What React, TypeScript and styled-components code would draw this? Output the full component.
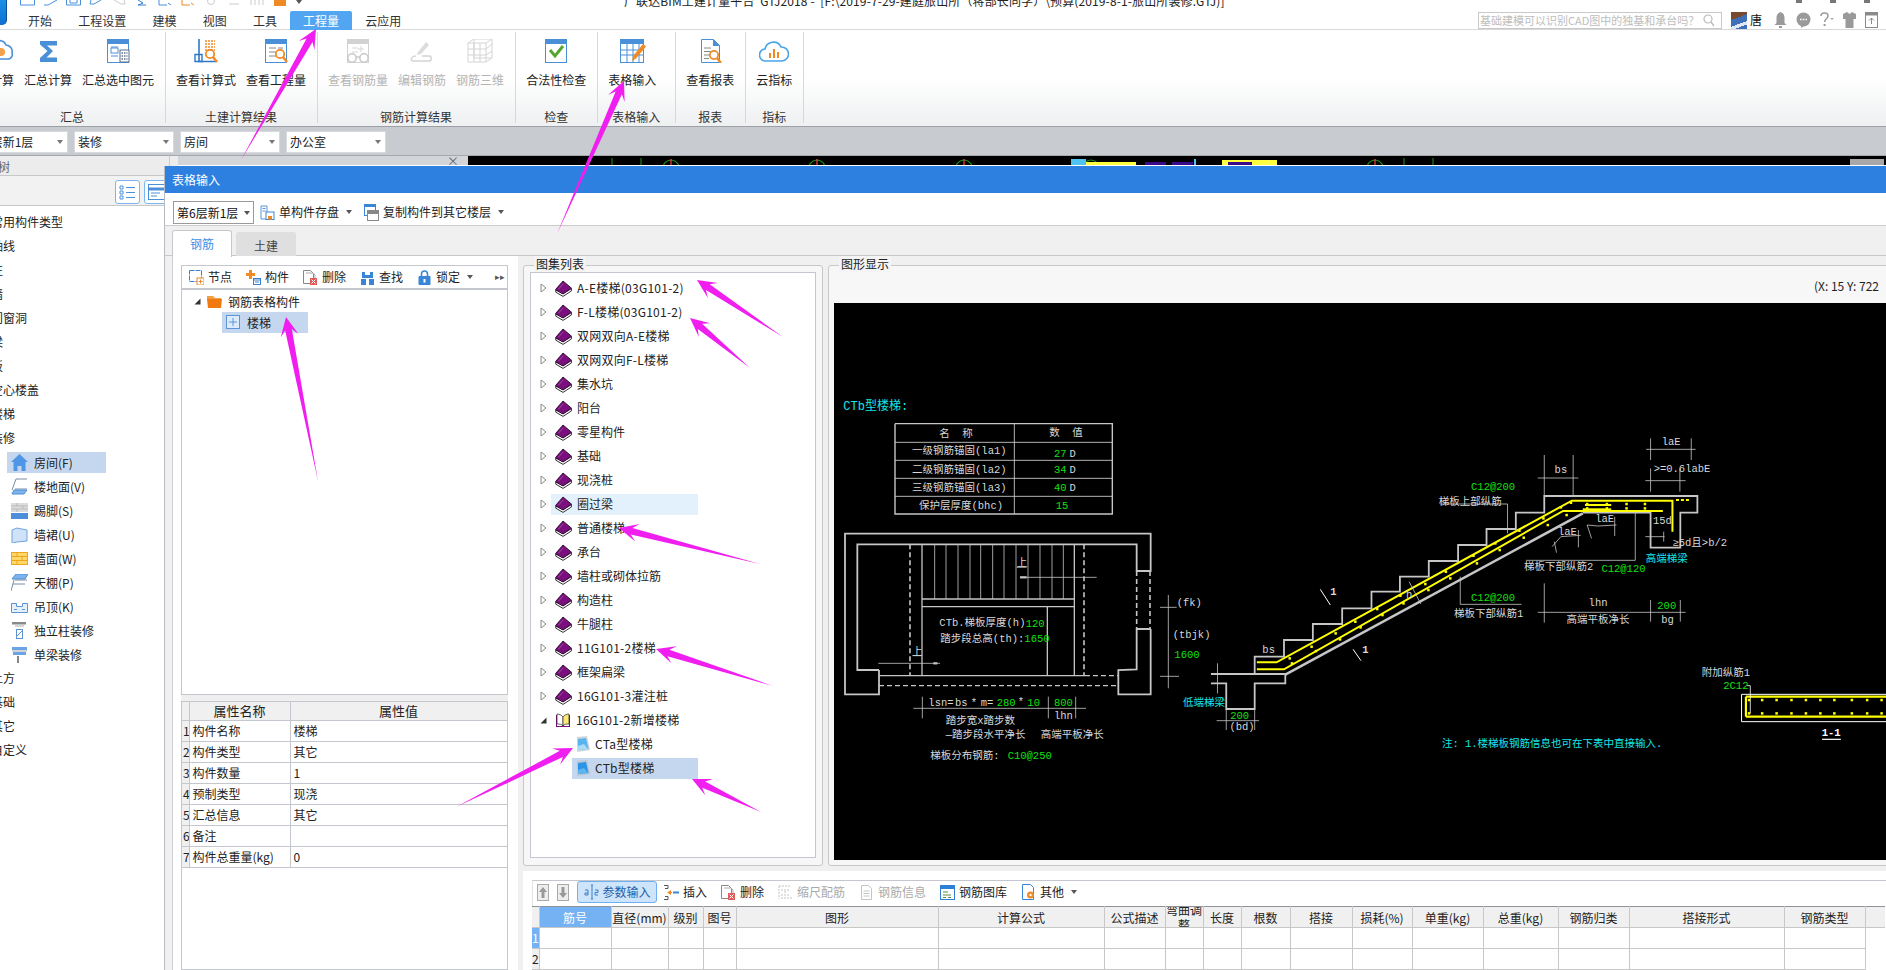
import React from "react";
import styled, { createGlobalStyle, css } from "styled-components";

const Global = createGlobalStyle`
  html, body { margin: 0; padding: 0; background: #fff; }
  * { box-sizing: border-box; }
`;

const FONT = `"Noto Sans CJK SC", "Noto Sans", sans-serif`;
const BLUE = "#4a90d9";
const ORANGE = "#f08a24";

/* ---------- page shell ---------- */
const Page = styled.div`
  position: relative;
  width: 1886px;
  height: 970px;
  overflow: hidden;
  background: #fff;
  font: 12px/16px ${FONT};
  color: #222;
`;
const TitleRow = styled.div`
  display: flex;
  height: 11px;
  padding-left: 20px;
`;
const QuickBar = styled.div`
  display: flex;
  gap: 8px;
  width: 604px;
  height: 6px;
  overflow: hidden;
`;
const Logo = styled.div`
  position: absolute;
  left: -14px;
  top: -8px;
  width: 21px;
  height: 33px;
  border-radius: 5px;
  background: linear-gradient(180deg, #1e9bf0, #0f6fd0);
  border-right: 1px solid #0c4f99;
`;
const WindowTitle = styled.div`
  margin-top: -8px;
  line-height: 18px;
  letter-spacing: 0.12px;
  white-space: pre;
  color: #222;
`;
const WindowControls = styled.div`
  display: flex;
  gap: 28px;
  position: absolute;
  right: 16px;
  top: 0;
  span { display: block; width: 6px; height: 3px; background: #777; }
`;
const TabRow = styled.div`
  display: flex;
  height: 19px;
  padding-left: 15px;
  border-bottom: 1px solid #d9d9d9;
`;
const TopTab = styled.div<{ $on?: boolean }>`
  padding: 0 13.1px;
  height: 19px;
  line-height: 20px;
  color: ${(p) => (p.$on ? "#fff" : "#333")};
  background: ${(p) => (p.$on ? "#52a5f0" : "transparent")};
  border-radius: 2px 2px 0 0;
  white-space: nowrap;
`;
const TopRight = styled.div`
  margin-left: auto;
  display: flex;
  align-items: center;
  height: 18px;
`;
const SearchBox = styled.div`
  display: flex;
  align-items: center;
  justify-content: space-between;
  width: 244px;
  height: 17px;
  padding: 0 6px 0 1px;
  border: 1px solid #c8c8c8;
  color: #bdbdbd;
  font-size: 11px;
  white-space: nowrap;
`;
const Avatar = styled.div`
  width: 16px;
  height: 17px;
  margin-left: 9px;
  background: linear-gradient(160deg, #7a4a30 0 35%, #3f6fb8 35% 65%, #dfe8f5 65% 80%, #3f6fb8 80%);
`;
const UserName = styled.span`
  margin: 0 11px 0 3px;
  color: #111;
`;
const TopIcons = styled.div`
  display: flex;
  align-items: center;
  gap: 8px;
  padding-right: 8px;
`;

/* ---------- ribbon ---------- */
const Ribbon = styled.div`
  display: flex;
  height: 97px;
  padding: 2px 0 3px;
  margin-left: -20px;
  width: 1906px;
  background: linear-gradient(180deg, #fff 0%, #fff 50%, #eef0f1 100%);
  border-bottom: 1px solid #9da1a6;
`;
const RibbonGroup = styled.div<{ $min?: number }>`
  display: flex;
  flex-direction: column;
  padding: 0 11px 0 10px;
  border-right: 1px solid #d6d8da;
  min-width: ${(p) => p.$min ?? 0}px;
`;
const RibbonButtons = styled.div`
  display: flex;
  gap: 10px;
  flex: 1;
`;
const RibbonButton = styled.div<{ $off?: boolean }>`
  display: flex;
  flex-direction: column;
  align-items: center;
  padding-top: 7px;
  white-space: nowrap;
  color: ${(p) => (p.$off ? "#b4b4b4" : "#222")};
  svg { display: block; margin-bottom: 9px; flex: none; }
`;
const RibbonLabel = styled.div`
  text-align: center;
  height: 16px;
  line-height: 16px;
  margin-bottom: -2px;
  color: #333;
  white-space: nowrap;
`;

/* ---------- filter strip ---------- */
const FilterStrip = styled.div`
  display: flex;
  gap: 6px;
  height: 29px;
  padding: 4px 0 0;
  margin-left: -32px;
  width: 1918px;
  background: #c8cbcf;
  border-bottom: 1px solid #a5a8ac;
`;
const FilterSelect = styled.div`
  display: flex;
  align-items: center;
  justify-content: space-between;
  width: 100px;
  height: 22px;
  padding: 0 4px 0 3px;
  background: #fff;
  border: 1px solid #d8dadd;
  white-space: nowrap;
`;
const Caret = styled.i<{ $dark?: boolean }>`
  display: inline-block;
  width: 0;
  height: 0;
  flex: none;
  border-left: 3px solid transparent;
  border-right: 3px solid transparent;
  border-top: 4px solid ${(p) => (p.$dark ? "#555" : "#777")};
`;

/* ---------- workspace behind the dialog ---------- */
const Workspace = styled.div`
  display: flex;
  height: 813px;
`;
const LeftNav = styled.div`
  flex: 0 0 170px;
  display: flex;
  flex-direction: column;
  border-right: 1px solid #ccc;
`;
const NavHeader = styled.div`
  height: 20px;
  flex: none;
  margin-left: -26px;
  line-height: 22px;
  background: #ececec;
  border-bottom: 1px solid #c8c8c8;
  color: #666;
  white-space: nowrap;
`;
const NavTools = styled.div`
  display: flex;
  justify-content: flex-end;
  gap: 4px;
  height: 30px;
  flex: none;
  padding-top: 4px;
  background: #f2f2f2;
  border-bottom: 1px solid #c8c8c8;
`;
const NavToolButton = styled.div`
  display: flex;
  align-items: center;
  justify-content: center;
  width: 25px;
  height: 24px;
  background: #fff;
  border: 1px solid #7ab6f0;
  border-radius: 3px;
`;
const NavTree = styled.div`
  display: flex;
  flex-direction: column;
  margin-left: -9px;
  padding-top: 4px;
`;
const NavRow = styled.div`
  height: 24px;
  line-height: 24px;
  white-space: nowrap;
  color: #222;
`;
const NavSub = styled.div<{ $on?: boolean }>`
  display: flex;
  align-items: center;
  gap: 6px;
  width: 99px;
  height: 21px;
  margin: 2px 0 1px 16px;
  padding-left: 4px;
  white-space: nowrap;
  background: ${(p) => (p.$on ? "#c5d7ee" : "transparent")};
  svg { flex: none; }
`;
const LightGap = styled.div`
  flex: 0 0 8px;
  background: #ececec;
`;
const ClosedPane = styled.div`
  flex: 0 0 290px;
  height: 9px;
  padding-right: 9px;
  background: #d3d5d9;
  color: #666;
  text-align: right;
  line-height: 10px;
  font-size: 12px;
`;
const CadStrip = styled.div`
  flex: 1;
  height: 9px;
  background: #000;
  svg { display: block; }
`;

/* ---------- dialog ---------- */
const Dialog = styled.div`
  position: absolute;
  left: 164px;
  top: 166px;
  right: 0;
  bottom: 0;
  display: flex;
  flex-direction: column;
  overflow: hidden;
  background: #f0f0f0;
  border-left: 1px solid #b8bcc2;
`;
const DialogTitle = styled.div`
  flex: none;
  height: 27px;
  line-height: 27px;
  padding-left: 7px;
  background: #2d7fe0;
  color: #fff;
`;
const DialogTools = styled.div`
  flex: none;
  display: flex;
  height: 33px;
  padding: 8px 0 0 8px;
  background: #fff;
  border-bottom: 1px solid #ccc;
`;
const FloorSelect = styled.div`
  display: flex;
  align-items: center;
  justify-content: space-between;
  width: 81px;
  height: 23px;
  padding: 0 3px;
  border: 1px solid #9a9a9a;
  white-space: nowrap;
  color: #111;
`;
const ToolItem = styled.div<{ $pad?: number; $off?: boolean; $on?: boolean }>`
  display: flex;
  align-items: center;
  gap: 4px;
  height: 22px;
  padding: 0 ${(p) => p.$pad ?? 7}px;
  white-space: nowrap;
  color: ${(p) => (p.$off ? "#aaa" : "#222")};
  svg { flex: none; }
  ${(p) =>
    p.$on &&
    css`
      background: #cde4fb;
      border: 1px solid #6fb1f0;
      border-radius: 3px;
      padding: 0 5.5px;
      color: #1f5fa8;
    `}
`;
const CaretSlot = styled.span`
  display: inline-flex;
  align-items: center;
  margin-left: 3px;
`;
const TabStrip = styled.div`
  flex: none;
  display: flex;
  gap: 4px;
  height: 30px;
  padding: 4px 0 0 7px;
  border-bottom: 1px solid #c8c8c8;
`;
const SheetTab = styled.div<{ $on?: boolean }>`
  width: 60px;
  height: ${(p) => (p.$on ? 27 : 24)}px;
  margin-top: ${(p) => (p.$on ? 0 : 2)}px;
  text-align: center;
  line-height: 25px;
  border-radius: 3px 3px 0 0;
  background: ${(p) => (p.$on ? "#fff" : "#dfdfdf")};
  color: ${(p) => (p.$on ? "#3a8ee6" : "#444")};
  border: 1px solid ${(p) => (p.$on ? "#c8c8c8" : "#dfdfdf")};
  border-bottom: 0;
  position: relative;
`;
const MainRow = styled.div`
  flex: 1;
  display: flex;
  padding-left: 7px;
  min-height: 0;
`;
const LeftColumn = styled.div`
  flex: 0 0 346px;
  min-width: 0;
  display: flex;
  flex-direction: column;
  padding: 9px 10px 0 8px;
  background: #fff;
  border-left: 1px solid #d0d0d0;
`;
const BoxTools = styled.div`
  flex: none;
  display: flex;
  align-items: center;
  height: 25px;
  border: 1px solid #c4c8ce;
  border-bottom: 2px solid #c4c8ce;
  position: relative;
`;
const TreeBox = styled.div`
  flex: 0 0 405px;
  padding-top: 1px;
  border: 1px solid #c4c8ce;
  border-top: 0;
`;
const TreeRow = styled.div<{ $indent: number }>`
  display: flex;
  align-items: center;
  gap: 6px;
  height: 21px;
  padding-left: ${(p) => p.$indent}px;
  white-space: nowrap;
`;
const TreeChip = styled.div`
  display: flex;
  align-items: center;
  gap: 6px;
  width: 86px;
  height: 21px;
  padding-left: 4px;
  background: #c5d7ee;
`;
const MoreArrows = styled.span`
  position: absolute;
  right: 2px;
  top: 3px;
  font-size: 9px;
  color: #555;
`;
const PropGap = styled.div`
  flex: 0 0 6px;
  background: #efefef;
`;
const PropBox = styled.div`
  flex: 1;
  border: 1px solid #c4c8ce;
  border-top: 0;
`;
const PropTable = styled.table`
  width: 325px;
  table-layout: fixed;
  border-collapse: collapse;
  td, th {
    border-right: 1px solid #c4c8ce;
    border-bottom: 1px solid #c4c8ce;
    padding: 0 0 0 3px;
    font-weight: 400;
    white-space: nowrap;
    overflow: hidden;
    height: 21px;
    color: #222;
  }
  th {
    height: 19px;
    padding: 0;
    font-size: 13px;
    background: #f0f0f0;
    border-top: 1px solid #c4c8ce;
    line-height: 18px;
  }
  td:first-child { padding: 0 0 0 1px; background: #f0f0f0; }
`;
const RightStack = styled.div`
  flex: 1;
  display: flex;
  flex-direction: column;
  margin-left: 5px;
  min-width: 0;
`;
const TopPanes = styled.div`
  flex: 0 0 610px;
  display: flex;
  gap: 5px;
  padding-top: 9px;
`;
const GroupBox = styled.div<{ $grow?: boolean }>`
  position: relative;
  flex: ${(p) => (p.$grow ? "0 0 1066px" : "0 0 300px")};
  padding: 6px 6px 5px ${(p) => (p.$grow ? 5 : 6)}px;
  background: #f7f7f7;
  border: 1px solid #c8c8c8;
  border-radius: 3px;
`;
const GroupLegend = styled.div`
  position: absolute;
  left: 10px;
  top: -10px;
  padding: 0 2px;
  height: 16px;
  line-height: 16px;
  background: #f4f4f4;
  color: #222;
`;
const ListBox = styled.div`
  height: 586px;
  padding-top: 3px;
  background: #fff;
  border: 1px solid #c4c8ce;
`;
const AtlasRow = styled.div<{ $indent?: number }>`
  display: flex;
  align-items: center;
  height: 24px;
  padding-left: ${(p) => p.$indent ?? 9}px;
  white-space: nowrap;
  color: #222;
`;
const AtlasChip = styled.div<{ $tone?: string; $w: number; $latin?: boolean }>`
  display: flex;
  align-items: center;
  width: ${(p) => p.$w}px;
  height: 21px;
  padding-left: 4px;
  gap: 5px;
  letter-spacing: ${(p) => (p.$latin ? 0.25 : 0)}px;
  background: ${(p) => p.$tone ?? "transparent"};
  svg { flex: none; }
`;
const ExpandSlot = styled.span`
  display: inline-flex;
  width: 11px;
  svg { display: block; }
`;
const CoordLine = styled.div`
  height: 31px;
  padding: 6px 0 0 980px;
  white-space: nowrap;
  color: #222;
`;
const CadView = styled.div`
  width: 1052px;
  height: 557px;
  background: #000;
  svg { display: block; }
`;
const BottomPanel = styled.div`
  flex: 1;
  margin-top: 5px;
  padding: 9px 0 0 9px;
  background: #fff;
  overflow: hidden;
`;
const BottomTools = styled.div`
  display: flex;
  align-items: center;
  height: 26px;
  padding-left: 4px;
  padding-bottom: 3px;
  border-top: 1px solid #c4c8ce;
  border-left: 1px solid #e4e4e4;
`;
const ArrowKey = styled.div`
  width: 12px;
  height: 17px;
  margin-right: 8px;
  background: #eee;
  border: 1px solid #aaa;
  svg { display: block; }
`;
const GridTable = styled.table`
  table-layout: fixed;
  border-collapse: collapse;
  width: 1353px;
  border-top: 1px solid #8d9299;
  th, td {
    padding: 0;
    border-right: 1px solid #c8c8c8;
    border-bottom: 1px solid #c8c8c8;
    font-weight: 400;
  }
  th {
    height: 21px;
    background: #f0f0f0;
    color: #222;
  }
  td { height: 21px; background: #fff; }
  td:first-child { background: #f0f0f0; overflow: hidden; }
  td:last-child, th:last-child { border-right: 0; }
  td:last-child { border-bottom: 0; }
`;
const HeadCell = styled.div`
  display: flex;
  align-items: center;
  justify-content: center;
  height: 20px;
  line-height: 15px;
  text-align: center;
  overflow: hidden;
`;
const HeadCellActive = styled(HeadCell)`
  background: #74b2f3;
  color: #fff;
`;
const RowNum = styled.div<{ $on?: boolean }>`
  height: 20px;
  line-height: 20px;
  overflow: hidden;
  color: ${(p) => (p.$on ? "#fff" : "#222")};
  background: ${(p) => (p.$on ? "#74b2f3" : "transparent")};
`;
const Arrows = styled.svg`
  position: absolute;
  inset: 0;
  pointer-events: none;
`;

/* ---------- icons ---------- */
const S = (w: number, h: number, vw: number, vh: number, c: React.ReactNode) => (
  <svg width={w} height={h} viewBox={`0 0 ${vw} ${vh}`} fill="none">
    {c}
  </svg>
);
const R = (n: React.ReactNode) => S(28, 24, 28, 24, n);

const Magnifier = ({ x, y }: { x: number; y: number }) => (
  <g>
    <circle cx={x} cy={y} r="4.2" fill="#fff" stroke={ORANGE} strokeWidth="1.8" />
    <path d={`M${x + 3} ${y + 3}l4 5`} stroke={ORANGE} strokeWidth="2.4" />
  </g>
);
const gDoc = (off: boolean) => {
  const c = off ? "#d2d2d2" : BLUE;
  return (
    <>
      <rect x="3.5" y="0.5" width="21" height="23" fill="#fff" stroke={c} />
      <rect x="3" y="0" width="22" height="5" fill={c} />
    </>
  );
};

const ribbonIcons: Record<string, React.ReactNode> = {
  cloudCalc: S(24, 24, 24, 24, (
    <>
      <path d="M1 19a6 6 0 0 1 1-12 7.5 7.5 0 0 1 14-1 6.5 6.5 0 0 1 6 8 4.5 4.5 0 0 1-3 6H3z" stroke={BLUE} strokeWidth="1.6" fill="#fff" />
      <circle cx="11" cy="13" r="4" fill="#f5a04a" />
    </>
  )),
  sigma: R(<path d="M6 2h17v4.5h-10l6 5.5-6.5 6.5H23V23H6v-4l7.5-7L6 5.5z" fill={BLUE} />),
  selected: R(
    <>
      {gDoc(false)}
      <rect x="7" y="9" width="7" height="5" stroke={BLUE} />
      <path d="M7 8h7M7 17h7" stroke={BLUE} />
      <rect x="16" y="11" width="9" height="12" fill="#fff" stroke="#5b6f85" />
      <path d="M17.5 14h6M17.5 17h6M17.5 20h6" stroke="#5b6f85" strokeDasharray="1.5 1" strokeWidth="1.4" />
    </>
  ),
  formula: R(
    <>
      <path d="M7 0v22.5h17" stroke="#2f78c8" strokeWidth="1.6" />
      <path d="M3 15.5h7v7H3z" stroke="#2f78c8" strokeWidth="1.4" />
      <path d="M13 2h10M13 5h10M13 8h10M13 11h10" stroke={ORANGE} strokeWidth="1.6" strokeDasharray="2 1" />
      <Magnifier x={18} y={15} />
    </>
  ),
  quantity: R(
    <>
      {gDoc(false)}
      <path d="M7 9h7M7 13h7M7 17h7M16 9h5" stroke="#888" />
      <Magnifier x={18} y={15} />
    </>
  ),
  rebarGlasses: R(
    <>
      {gDoc(true)}
      <path d="M8 9h6M8 13h6M17 7v6M14 10h6" stroke="#d6d6d6" />
      <circle cx="8" cy="19" r="4.2" stroke="#c9c9c9" strokeWidth="1.6" fill="#fff" />
      <circle cx="20" cy="19" r="4.2" stroke="#c9c9c9" strokeWidth="1.6" fill="#fff" />
      <path d="M12 18h4" stroke="#c9c9c9" strokeWidth="1.4" />
    </>
  ),
  editRebar: R(
    <>
      <path d="M10 13l8-10 3 3-8 9-4 1z" fill="#dcdcdc" />
      <path d="M4 22c-2-3 1-5 4-5M14 17h7c3 0 3 5 0 5H4" stroke="#d4d4d4" strokeWidth="1.4" />
    </>
  ),
  rebar3d: R(
    <path d="M2 4l6-4h18v19l-6 4H2zM2 4h18v19M20 4l6-4M8 0v19h18M2 10h18l6-5M2 16h18l6-4M8 4v19M14 4v19" stroke="#d4d4d4" strokeWidth="1" />
  ),
  check: R(
    <>
      {gDoc(false)}
      <path d="M8 11l5 6 8-10" stroke="#55a630" strokeWidth="3" fill="none" />
    </>
  ),
  table: R(
    <>
      <rect x="2.5" y="0.5" width="23" height="23" fill="#fff" stroke={BLUE} />
      <rect x="2" y="0" width="24" height="5" fill={BLUE} />
      <path d="M3 11h22M3 16h22M9 5v18M15 5v18M21 5v18" stroke={BLUE} />
      <path d="M14 22l1-5 10-12 3 2.5-10 12z" fill={ORANGE} />
    </>
  ),
  report: R(
    <>
      <path d="M5.5.5h12l6 6v17h-18z" fill="#fff" stroke={BLUE} />
      <path d="M17 0l7 7h-7z" fill={BLUE} />
      <path d="M8 9h7M8 12.5h7M8 16h5M8 19.5h5" stroke="#888" />
      <Magnifier x={18} y={16} />
    </>
  ),
  cloudIndex: S(30, 24, 30, 24, (
    <>
      <path d="M7 22a6 6 0 0 1-1-12 8.5 8.5 0 0 1 16-2 7 7 0 0 1 1 14z" stroke="#49a5e8" strokeWidth="1.6" fill="#fff" />
      <path d="M10 14h2v5h-2zM14 10h2v9h-2zM18 13h2v6h-2z" fill={ORANGE} />
    </>
  )),
};

const small: Record<string, React.ReactNode> = {
  list: S(17, 16, 17, 16, <path d="M1 2h3v3H1zM1 7h3v3H1zM1 12h3v3H1zM7 3.5h9M7 8.5h9M7 13.5h9" stroke={BLUE} />),
  form: S(17, 16, 17, 16, <><rect x=".5" y=".5" width="16" height="15" stroke={BLUE} /><path d="M1 5h15" stroke={BLUE} strokeWidth="3" /><path d="M3 9h9M3 12h6" stroke={BLUE} /></>),
  house: S(17, 17, 17, 17, <path d="M8.5 0L17 8h-2.5v9h-4v-5h-4v5h-4V8H0z" fill="#4f97e6" />),
  floor: S(17, 17, 17, 17, <><path d="M5 1h11M5 1L1 12M4 11h12" stroke="#7a8da3" /><path d="M3 12h13l-3 4H1z" fill="#7db3ee" stroke="#4f8fd4" /></>),
  brick: S(17, 16, 17, 16, <><path d="M0 0h17v9H0z" fill="#dcdcdc" /><path d="M0 3h17M0 6h17M6 0v3M12 3v3M6 6v3" stroke="#bbb" /><path d="M0 10h17v6H0z" fill="#4d8fd8" /></>),
  wainscot: S(17, 16, 17, 16, <path d="M1 3l5-2 10 2v11l-10 1-5 1z" fill="#cfe2f8" stroke="#6ea5e2" />),
  wall: S(17, 13, 17, 13, <><rect x=".5" y=".5" width="16" height="12" fill="#ffd76a" stroke="#eda51b" /><path d="M0 4.5h17M0 8.5h17M6 0v4.5M11 4.5v4M6 8.5V13" stroke="#eda51b" /></>),
  ceiling: S(17, 17, 17, 17, <><path d="M5 0h12l-3 5H1z" fill="#7db3ee" stroke="#4f8fd4" /><path d="M4 6h12M3 6L0 17M2 10h12" stroke="#7a8da3" /></>),
  hung: S(17, 12, 17, 12, <path d="M.5 2.5h5v3h6v-3h5v9H.5zM3 8.5h3M11 8.5h3" stroke="#5b95d8" fill="#e5f0fb" />),
  colFinish: S(17, 17, 17, 17, <><path d="M1 0h14v3L12 7v10H5V7L1 3z" fill="#fff" /><path d="M1 1h14" stroke="#8a8a8a" strokeWidth="3" /><path d="M4 4h9" stroke="#aaa" /><rect x="5.5" y="7.5" width="6" height="9" stroke="#5b95d8" /><path d="M6 14l5-5" stroke="#5b95d8" /></>),
  beamFinish: S(17, 17, 17, 17, <><path d="M1 1h15v3H1z" fill="#6aa4e6" /><path d="M2 6h13v3H2z" fill="#6aa4e6" /><path d="M7 10v7" stroke="#888" strokeWidth="2" /><path d="M1 5h15" stroke="#aaa" /></>),
  save: S(15, 15, 15, 15, <><path d="M1 1h6v13H1z" stroke="#5b95d8" /><path d="M2.5 3.5h3M2.5 6h3" stroke="#5b95d8" /><rect x="6" y="7" width="8" height="7.5" fill="#fff" stroke="#3a86d6" /><rect x="8" y="11" width="4" height="3.5" fill={ORANGE} /></>),
  copy: S(15, 17, 15, 17, <><rect x=".5" y=".5" width="11" height="11" fill="#fff" stroke="#3a86d6" /><path d="M0 1.5h12" stroke="#3a86d6" strokeWidth="3" /><rect x="3.5" y="6.5" width="11" height="10" fill="#fff" stroke="#888" /><path d="M3 8.5h12" stroke="#888" strokeWidth="3" /></>),
  node: S(15, 15, 15, 15, <><rect x=".5" y=".5" width="12" height="11" stroke="#3a7fcc" strokeDasharray="5 1" /><rect x="8" y="8" width="7" height="7" fill="#fff" stroke="#e88a2a" /><path d="M11.5 9.5v4M9.5 11.5h4" stroke="#e88a2a" /></>),
  component: S(15, 15, 15, 15, <><path d="M3 0h3v3h3v3H6v3H3V6H0V3h3z" fill={ORANGE} /><rect x="7.5" y="8.5" width="7" height="6" fill="#fff" stroke="#3a7fcc" /><path d="M7 10h8M9 12h4" stroke="#3a7fcc" /></>),
  del: S(15, 15, 15, 15, <><path d="M.5.5h7l3 3v10H.5z" fill="#fff" stroke="#888" /><path d="M3 3h7l2 2v9" stroke="#aaa" /><rect x="7" y="8" width="7" height="7" fill="#e05a5a" /><path d="M8.5 9.5l4 4M12.5 9.5l-4 4" stroke="#fff" /></>),
  find: S(15, 15, 15, 15, <path d="M1 9h5v6H1zM9 9h5v6H9zM2 2h3v6H2zM10 2h3v6h-3zM5 5h5v3H5z" fill="#3a86d6" />),
  lock: S(15, 15, 15, 15, <><path d="M4.5 7V4a3 3 0 0 1 6 0v3" stroke="#3a86d6" strokeWidth="1.6" /><rect x="1.5" y="6" width="12" height="9" rx="1" fill="#3a86d6" /><rect x="6.5" y="9" width="2" height="3.5" fill="#fff" /></>),
  folder: S(15, 13, 15, 13, <><path d="M0 1h6l2 2h6v2H0z" fill="#f0a040" /><path d="M0 4h15l-1 9H1z" fill="#f07a10" /></>),
  stair: S(15, 15, 15, 15, <><rect x=".5" y=".5" width="13" height="13" fill="#dcebfa" stroke="#5b95d8" /><path d="M7 3v8M3 7h8" stroke="#5b95d8" /></>),
  book: S(17, 17, 17, 17, <><path d="M.8 10v2.2L8 16.4l8.4-5.4V8.6L8 13.6z" fill="#fff" stroke="#1c1c1c" strokeWidth=".9" /><path d="M.5 9.6L8 1l8.5 7.2L8 14z" fill="#7a0f7e" stroke="#2c0830" strokeWidth=".9" /><path d="M3.5 9.2L8.4 3.6" stroke="#a850ab" strokeWidth=".8" /></>),
  openBook: S(16, 15, 16, 15, <><path d="M1 14h14V2h-1v11H2V2H1z" fill="#7a0f7e" /><path d="M2 1c2 0 5 1 6 3v9C7 11 4 11 2 11z" fill="#fff" stroke="#222" strokeWidth=".7" /><path d="M14 1c-2 0-5 1-6 3v9c1-2 4-2 6-2z" fill="#ffe87a" stroke="#222" strokeWidth=".7" /></>),
  sheetA: S(14, 16, 14, 16, <><path d="M1 1l10-1 3 14-13 2z" fill="#cfd6dc" /><path d="M2 3l8-1 2.5 11L2 14z" fill="#57b4ec" /><path d="M2 10l6-2 4 5-10 1z" fill="#a9dbf5" /></>),
  sheetB: S(14, 16, 14, 16, <><path d="M1 1l10-1 3 14-13 2z" fill="#b8c6d6" /><path d="M2 3l8-1 2.5 11L2 14z" fill="#2b94e6" /><path d="M2 10l6-2 4 5-10 1z" fill="#5fb6ef" /></>),
  closedArrow: S(7, 10, 7, 10, <path d="M1 1l5 4-5 4z" stroke="#888" fill="#fff" />),
  openArrow: S(7, 7, 7, 7, <path d="M6.5 .5v6h-6z" fill="#333" />),
  aje: S(15, 16, 15, 16, <path d="M1 6h3v5H1V9h3M7 1h1M9 1H8v14M7 15h2M11 6h3v2.5h-3V11h3" stroke="#3a7fcc" />),
  insert: S(15, 15, 15, 15, <><path d="M0 .5h4v3H1M0 14.5h4v-3H1" stroke="#555" /><path d="M7 5v5L3 7.5z" fill={ORANGE} /><path d="M6 7.5h2" stroke={ORANGE} /><path d="M9 7.5h6" stroke="#3a86d6" strokeWidth="2" /></>),
  scale: S(15, 15, 15, 15, <path d="M1 1h12M1 1v13M4 14V8M7 14V6M10 14V9M13 14v-3M3 5h9" stroke="#c4c4c4" strokeDasharray="2 1" />),
  info: S(15, 15, 15, 15, <><path d="M2.5 .5h7l3 3v11h-10z" stroke="#c4c4c4" /><path d="M4.5 6h6M4.5 8.5h6M4.5 11h6" stroke="#c4c4c4" /></>),
  library: S(15, 15, 15, 15, <><rect x=".5" y=".5" width="14" height="14" fill="#fff" stroke="#2d7fd8" /><path d="M0 2.5h15" stroke="#2d7fd8" strokeWidth="3" /><path d="M3 7h5M3 10h8M3 12.5h3M8 12.5h3" stroke="#5a8a40" /></>),
  other: S(15, 16, 15, 16, <><path d="M1.5 .5h8l3 3v12h-11z" fill="#fff" stroke="#3a86d6" /><circle cx="9.5" cy="11" r="3.5" fill={ORANGE} /><circle cx="9.5" cy="11" r="1.2" fill="#fff" /></>),
  searchGlass: S(12, 13, 12, 13, <><circle cx="5" cy="5" r="4" stroke="#bbb" strokeWidth="1.2" /><path d="M8 8l3 4" stroke="#bbb" strokeWidth="1.4" /></>),
  bell: S(15, 16, 15, 16, <path d="M7.5 0c3 1 4 3 4 6v5l2 2H1.5l2-2V6c0-3 1-5 4-6zM6 14h3v2H6z" fill="#9a9a9a" />),
  chat: S(15, 16, 15, 16, <><circle cx="7.5" cy="7.5" r="7" fill="#9a9a9a" /><path d="M5 14v2l3-2z" fill="#9a9a9a" /><path d="M4 7.5h7" stroke="#fff" strokeWidth="1.6" strokeDasharray="1.6 1.2" /></>),
  help: S(15, 16, 15, 16, <><path d="M2 4c0-4 7-4 7 0 0 3-3.5 3-3.5 6" stroke="#9a9a9a" strokeWidth="1.5" /><rect x="4.6" y="12" width="2" height="2" fill="#9a9a9a" /><path d="M11 6l2 2 2-2z" fill="#aaa" /></>),
  shirt: S(15, 16, 15, 16, <path d="M5 0L1 2v5h2.5v9h8V7H14V2l-4-2-2.5 2z" fill="#9a9a9a" />),
  box: S(13, 16, 13, 16, <><rect x=".5" y=".5" width="12" height="15" fill="#fff" stroke="#8a8a8a" /><path d="M0 2h13" stroke="#8a8a8a" strokeWidth="3" /><path d="M6.5 6v6M4 8.5l2.5-2.5L9 8.5" stroke="#8a8a8a" /></>),
};

/* ---------- data ---------- */
const ribbon = [
  { label: "汇总", buttons: [{ t: "计算", i: "cloudCalc" }, { t: "汇总计算", i: "sigma" }, { t: "汇总选中图元", i: "selected" }] },
  { label: "土建计算结果", buttons: [{ t: "查看计算式", i: "formula" }, { t: "查看工程量", i: "quantity" }] },
  { label: "钢筋计算结果", buttons: [{ t: "查看钢筋量", i: "rebarGlasses", off: true }, { t: "编辑钢筋", i: "editRebar", off: true }, { t: "钢筋三维", i: "rebar3d", off: true }] },
  { label: "检查", buttons: [{ t: "合法性检查", i: "check" }] },
  { label: "表格输入", min: 78, buttons: [{ t: "表格输入", i: "table" }] },
  { label: "报表", buttons: [{ t: "查看报表", i: "report" }] },
  { label: "指标", buttons: [{ t: "云指标", i: "cloudIndex" }] },
];

const navBefore = ["常用构件类型", "轴线", "柱", "墙", "门窗洞", "梁", "板", "空心楼盖", "楼梯", "装修"];
const navSubs = [
  { t: "房间(F)", i: "house", on: true },
  { t: "楼地面(V)", i: "floor" },
  { t: "踢脚(S)", i: "brick" },
  { t: "墙裙(U)", i: "wainscot" },
  { t: "墙面(W)", i: "wall" },
  { t: "天棚(P)", i: "ceiling" },
  { t: "吊顶(K)", i: "hung" },
  { t: "独立柱装修", i: "colFinish" },
  { t: "单梁装修", i: "beamFinish" },
];
const navAfter = ["土方", "基础", "其它", "自定义"];

const props = [
  ["构件名称", "楼梯"],
  ["构件类型", "其它"],
  ["构件数量", "1"],
  ["预制类型", "现浇"],
  ["汇总信息", "其它"],
  ["备注", ""],
  ["构件总重量(kg)", "0"],
];

const atlas = [
  "A-E楼梯(03G101-2)", "F-L楼梯(03G101-2)", "双网双向A-E楼梯", "双网双向F-L楼梯", "集水坑", "阳台", "零星构件", "基础", "现浇桩",
  "圈过梁", "普通楼梯", "承台", "墙柱或砌体拉筋", "构造柱", "牛腿柱", "11G101-2楼梯", "框架扁梁", "16G101-3灌注桩",
];

const columns: [string, number][] = [
  ["", 7], ["筋号", 72], ["直径(mm)", 57], ["级别", 35], ["图号", 33], ["图形", 202], ["计算公式", 166], ["公式描述", 61],
  ["弯曲调整", 38], ["长度", 38], ["根数", 49], ["搭接", 62], ["损耗(%)", 60], ["单重(kg)", 71], ["总重(kg)", 75],
  ["钢筋归类", 71], ["搭接形式", 155], ["钢筋类型", 81], ["", 20],
];

/* ---------- CAD drawing ---------- */
type Pt = [number, number];
const z7 = (p: Pt): Pt => [830 + p[0] / 3, 390 + p[1] / 3];
const z8 = (p: Pt): Pt => [1200 + p[0] / 2.286, 430 + p[1] / 3];
const pts = (a: Pt[], f: (p: Pt) => Pt) => a.map(f).map((p) => p.join(",")).join(" ");

const W = "#c6c6c6";
const THIN = "#d8d8d8";
const GR = "#12e012";
const CY = "#16e6ea";
const YL = "#ffff00";

const lines7: { p: Pt[]; w?: number; d?: string; c?: string }[] = [
  // plan outline
  { p: [[147, 840], [147, 913], [45, 913], [45, 431], [962, 431], [962, 543], [920, 543], [920, 463], [82, 463], [82, 840], [147, 840]], w: 1.8 },
  { p: [[962, 717], [920, 717], [920, 838], [865, 840], [865, 913], [962, 913], [962, 717]], w: 1.8 },
  { p: [[920, 543], [920, 717]], w: 1.6, d: "5 3" },
  { p: [[960, 543], [960, 717]], w: 1.6, d: "5 3" },
  { p: [[240, 463], [240, 857]], w: 1.6, d: "5 3" },
  { p: [[762, 463], [762, 857]], w: 1.6, d: "5 3" },
  { p: [[276, 463], [276, 857]], w: 1.3 },
  { p: [[733, 463], [733, 857]], w: 1.3 },
  { p: [[276, 627], [733, 627]], w: 1.3 },
  { p: [[276, 650], [733, 650]], w: 1.3 },
  { p: [[652, 650], [652, 857]], w: 1.3 },
  { p: [[147, 857], [765, 857]], w: 1.3 },
  { p: [[765, 857], [865, 857]], w: 1.3, d: "5 3" },
  { p: [[147, 887], [865, 887]], w: 1.3, d: "5 3" },
  ...[314, 348, 384, 420, 452, 488, 522, 558, 594, 630, 666, 700].map((x) => ({ p: [[x, 463], [x, 627]] as Pt[], w: 0.8 })),
  // run arrows and labels
  { p: [[570, 562], [800, 562]], w: 0.8 },
  { p: [[570, 562], [590, 562]], w: 2.2 },
  { p: [[145, 820], [330, 820]], w: 0.8 },
  { p: [[310, 820], [322, 820]], w: 2.2 },
  { p: [[560, 532], [590, 532]], w: 0.8 },
  { p: [[248, 797], [275, 797]], w: 0.8 },
  // side dim
  { p: [[1015, 615], [1015, 895]], w: 0.8 },
  { p: [[990, 652], [1040, 652]], w: 0.8 },
  { p: [[990, 859], [1047, 859]], w: 0.8 },
  // lower dim
  { p: [[250, 955], [768, 955]], w: 0.8 },
  { p: [[277, 920], [277, 985]], w: 0.8 },
  { p: [[655, 920], [655, 985]], w: 0.8 },
  { p: [[737, 920], [737, 985]], w: 0.8 },
  // section table
  { p: [[195, 101], [847, 101], [847, 372], [195, 372], [195, 101]], w: 1.4 },
  { p: [[553, 101], [553, 372]], w: 0.9 },
  { p: [[195, 157], [847, 157]], w: 0.9 },
  { p: [[195, 211], [847, 211]], w: 0.9 },
  { p: [[195, 265], [847, 265]], w: 0.9 },
  { p: [[195, 319], [847, 319]], w: 0.9 },
];

const lines8: { p: Pt[]; w?: number; d?: string; c?: string }[] = [
  { p: [[25, 732], [195, 732], [195, 760], [125, 760], [125, 837], [60, 837], [60, 760], [25, 760]], w: 1.8 },
  {
    p: [[125, 732], [125, 680], [192, 680], [192, 630], [258, 630], [258, 582], [325, 582], [325, 535], [392, 535], [392, 485], [457, 485], [457, 440], [523, 440], [523, 393], [590, 393], [590, 345], [655, 345], [655, 297], [722, 297], [722, 248], [787, 248], [787, 198], [1137, 198], [1137, 248], [1098, 248], [1098, 353], [1030, 353], [1030, 248], [875, 248]],
    w: 1.8,
  },
  { p: [[875, 250], [195, 734]], w: 2.6 },
  { p: [[38, 872], [135, 872]], w: 0.8 },
  { p: [[60, 840], [60, 900]], w: 0.8 },
  { p: [[125, 840], [125, 900]], w: 0.8 },
  { p: [[40, 700], [40, 790]], w: 0.8 },
  // yellow bars
  { p: [[130, 697], [175, 697], [850, 212], [1080, 212], [1080, 305]], w: 2, c: YL },
  { p: [[130, 718], [192, 718], [830, 243], [1058, 243]], w: 2, c: YL },
  { p: [[880, 225], [940, 225]], w: 2, c: YL },
  { p: [[875, 238], [940, 238]], w: 2, c: YL },
  { p: [[1088, 210], [1120, 210]], w: 2, c: YL, d: "3 2" },
  // top dims
  { p: [[1020, 58], [1133, 58]], w: 0.8 },
  { p: [[1030, 25], [1030, 90]], w: 0.8 },
  { p: [[1123, 25], [1123, 90]], w: 0.8 },
  { p: [[1018, 152], [1110, 152]], w: 0.8 },
  { p: [[1030, 115], [1030, 185]], w: 0.8 },
  { p: [[1097, 115], [1097, 185]], w: 0.8 },
  { p: [[772, 144], [865, 144]], w: 0.8 },
  { p: [[787, 75], [787, 195]], w: 0.8 },
  { p: [[853, 75], [853, 195]], w: 0.8 },
  // leaders
  { p: [[550, 222], [703, 222], [703, 310]], w: 0.8 },
  { p: [[745, 391], [995, 391], [995, 248]], w: 0.8 },
  { p: [[595, 440], [595, 523], [735, 523]], w: 0.8 },
  { p: [[772, 547], [1110, 547]], w: 0.8 },
  { p: [[787, 460], [787, 578]], w: 0.8 },
  { p: [[1030, 510], [1030, 575]], w: 0.8 },
  { p: [[1098, 510], [1098, 575]], w: 0.8 },
  { p: [[1018, 320], [1062, 320]], w: 0.8 },
  { p: [[1060, 305], [1060, 335]], w: 0.8 },
  { p: [[805, 350], [825, 320], [870, 316]], w: 0.8 },
  { p: [[865, 300], [865, 352]], w: 0.8 },
  { p: [[885, 285], [910, 288], [952, 285]], w: 0.8 },
  { p: [[948, 260], [948, 318]], w: 0.8 },
  { p: [[885, 285], [895, 325]], w: 0.8 },
  { p: [[810, 335], [815, 368]], w: 0.8 },
  { p: [[478, 455], [505, 522]], w: 0.8 },
  // section marks
  { p: [[275, 478], [298, 525]], w: 1, c: "#fff" },
  { p: [[350, 658], [368, 692]], w: 1, c: "#fff" },
  // section
  { p: [[1238, 793], [1600, 793], [1600, 875], [1238, 875], [1238, 793]], w: 1, c: "#fff" },
  { p: [[1248, 800], [1600, 800]], w: 2.2, c: YL },
  { p: [[1248, 860], [1600, 860]], w: 2.2, c: YL },
  { p: [[1248, 800], [1248, 860]], w: 2.2, c: YL },
  { p: [[1250, 767], [1258, 767], [1258, 850]], w: 0.8, c: "#fff" },
  { p: [[1422, 928], [1465, 928]], w: 1.2, c: "#fff" },
];

const dots8: Pt[] = [
  [205, 685], [255, 650], [310, 610], [355, 575], [405, 537], [458, 497], [515, 462], [562, 425], [625, 377], [675, 340], [730, 302], [785, 265], [825, 232],
  [210, 700], [265, 663], [320, 628], [367, 592], [417, 555], [465, 520], [522, 480], [572, 445], [633, 400], [685, 360], [740, 323], [795, 285], [838, 255],
  [848, 218], [885, 222], [930, 222], [975, 222], [1017, 222], [885, 235], [930, 235], [975, 235], [1017, 235],
  ...[1255, 1285, 1318, 1352, 1385, 1418, 1450, 1490, 1525, 1558].flatMap((x) => [[x, 810], [x, 850]] as Pt[]),
];

type T = { t: string; x: number; y: number; c?: string; a?: "start" | "middle"; s?: number; b?: boolean };
const text7: T[] = [
  { t: "CTb型楼梯:", x: 40, y: 52, c: CY, s: 12 },
  { t: "名  称", x: 378, y: 132, a: "middle" },
  { t: "数  值", x: 708, y: 130, a: "middle" },
  { t: "一级钢筋锚固(la1)", x: 388, y: 183, a: "middle" },
  { t: "二级钢筋锚固(la2)", x: 388, y: 240, a: "middle" },
  { t: "三级钢筋锚固(la3)", x: 388, y: 295, a: "middle" },
  { t: "保护层厚度(bhc)", x: 393, y: 349, a: "middle" },
  { t: "27", x: 691, y: 191, c: GR, a: "middle" },
  { t: "D", x: 728, y: 191, a: "middle" },
  { t: "34", x: 691, y: 239, c: GR, a: "middle" },
  { t: "D", x: 728, y: 239, a: "middle" },
  { t: "40", x: 691, y: 295, c: GR, a: "middle" },
  { t: "D", x: 728, y: 295, a: "middle" },
  { t: "15", x: 696, y: 347, c: GR, a: "middle" },
  { t: "上", x: 576, y: 520, a: "middle" },
  { t: "上", x: 262, y: 785, a: "middle" },
  { t: "CTb.梯板厚度(h)", x: 328, y: 700 },
  { t: "120", x: 587, y: 701, c: GR },
  { t: "踏步段总高(th):", x: 331, y: 747 },
  { t: "1650", x: 583, y: 747, c: GR },
  { t: "(fk)", x: 1040, y: 640 },
  { t: "(tbjk)", x: 1028, y: 736 },
  { t: "1600", x: 1033, y: 794, c: GR },
  { t: "lsn=", x: 295, y: 938 },
  { t: "bs", x: 375, y: 938 },
  { t: "*", x: 422, y: 938 },
  { t: "m=", x: 452, y: 938 },
  { t: "280", x: 500, y: 940, c: GR },
  { t: "*", x: 563, y: 937 },
  { t: "10", x: 592, y: 938, c: GR },
  { t: "800", x: 672, y: 938, c: GR },
  { t: "lhn", x: 672, y: 978 },
  { t: "踏步宽x踏步数", x: 347, y: 994 },
  { t: "—踏步段水平净长", x: 347, y: 1035 },
  { t: "高端平板净长", x: 632, y: 1034 },
  { t: "梯板分布钢筋:", x: 301, y: 1098 },
  { t: "C10@250", x: 533, y: 1097, c: GR },
  { t: "低端梯梁", x: 1122, y: 938, c: CY, a: "middle" },
  { t: "bs", x: 1316, y: 780, a: "middle" },
  { t: "200", x: 1229, y: 977, c: GR, a: "middle" },
  { t: "(bd)", x: 1236, y: 1010, a: "middle" },
];
const text8: T[] = [
  { t: "bs", x: 825, y: 120, a: "middle" },
  { t: "C12@200", x: 670, y: 170, c: GR, a: "middle" },
  { t: "梯板上部纵筋", x: 618, y: 217, a: "middle" },
  { t: "laE", x: 1077, y: 37, a: "middle" },
  { t: ">=0.6labE", x: 1037, y: 116 },
  { t: "15d", x: 1057, y: 272, a: "middle" },
  { t: "≥5d且>b/2", x: 1080, y: 338 },
  { t: "高端梯梁", x: 1067, y: 388, c: CY, a: "middle" },
  { t: "laE", x: 925, y: 268, a: "middle" },
  { t: "laE", x: 840, y: 305, a: "middle" },
  { t: "梯板下部纵筋2", x: 820, y: 412, a: "middle" },
  { t: "C12@120", x: 968, y: 418, c: GR, a: "middle" },
  { t: "C12@200", x: 670, y: 503, c: GR, a: "middle" },
  { t: "梯板下部纵筋1", x: 660, y: 552, a: "middle" },
  { t: "lhn", x: 910, y: 518, a: "middle" },
  { t: "高端平板净长", x: 910, y: 570, a: "middle" },
  { t: "200", x: 1067, y: 527, c: GR, a: "middle" },
  { t: "bg", x: 1069, y: 570, a: "middle" },
  { t: "h", x: 478, y: 495, a: "middle" },
  { t: "1", x: 305, y: 487, a: "middle", b: true },
  { t: "1", x: 378, y: 660, a: "middle", b: true },
  { t: "注: 1.楼梯板钢筋信息也可在下表中直接输入.", x: 553, y: 943, c: CY },
  { t: "附加纵筋1", x: 1202, y: 730, a: "middle" },
  { t: "2C12", x: 1225, y: 767, c: GR, a: "middle" },
  { t: "1-1", x: 1443, y: 910, a: "middle", b: true, c: "#fff" },
];

const CadText = ({ item, map }: { item: T; map: (p: Pt) => Pt }) => {
  const [x, y] = map([item.x, item.y]);
  return (
    <text
      x={x}
      y={y}
      fill={item.c ?? THIN}
      fontSize={item.s ?? 10.5}
      fontWeight={item.b ? 700 : 400}
      textAnchor={item.a ?? "start"}
      dominantBaseline="central"
      fontFamily={`"Liberation Mono", "Noto Sans CJK SC", monospace`}
      xmlSpace="preserve"
    >
      {item.t}
    </text>
  );
};

const CadDrawing = () => (
  <svg width="1052" height="557" viewBox="834 303 1052 557">
    {lines7.map((l, i) => (
      <polyline key={i} points={pts(l.p, z7)} fill="none" stroke={l.c ?? W} strokeWidth={l.w ?? 1} strokeDasharray={l.d} />
    ))}
    {lines8.map((l, i) => (
      <polyline key={i} points={pts(l.p, z8)} fill="none" stroke={l.c ?? W} strokeWidth={l.w ?? 1} strokeDasharray={l.d} />
    ))}
    {dots8.map((d, i) => {
      const [x, y] = z8(d);
      return <rect key={i} x={x - 1.2} y={y - 1.2} width="2.5" height="2.5" fill={YL} />;
    })}
    {text7.map((t, i) => <CadText key={i} item={t} map={z7} />)}
    {text8.map((t, i) => <CadText key={i} item={t} map={z8} />)}
  </svg>
);

const StripArt = () => (
  <svg width="1418" height="9" viewBox="468 157 1418 9">
    {[671, 817, 964, 1091, 1375].map((x) => (
      <circle key={x} cx={x} cy={169} r="8" fill="none" stroke="#1a9a1a" strokeWidth="1.2" />
    ))}
    {[671, 817, 964, 1375].map((x) => <path key={x} d={`M${x} 160v8`} stroke="#ff4040" strokeWidth="1.2" />)}
    {[612, 641, 1404, 1433].map((x) => <path key={x} d={`M${x} 159v8`} stroke="#1a9a1a" />)}
    <path d="M1071 160h15v6h-15z" fill="#4fc4f0" />
    <path d="M1086 163h50v3h-50z" fill="#ffff40" />
    <path d="M1145 163h21v3h-21zM1172 163h21v3h-21z" fill="#3a0a8a" />
    <path d="M1194 160h2v6h-2z" fill="#4fc4f0" />
    <path d="M1222 161h55v5h-55z" fill="#ffff40" />
    <path d="M1228 163h24v3h-24z" fill="#3a0a8a" />
    <rect x="1850" y="160" width="34" height="6" fill="#a8a8a8" />
  </svg>
);

/* ---------- overlay arrows ---------- */
const arrow = (t: Pt, p: Pt) => {
  const len = Math.hypot(p[0] - t[0], p[1] - t[1]);
  const d: Pt = [(p[0] - t[0]) / len, (p[1] - t[1]) / len];
  const n: Pt = [-d[1], d[0]];
  const at = (back: number, side: number) => `${p[0] - d[0] * back + n[0] * side},${p[1] - d[1] * back + n[1] * side}`;
  return [t.join(","), at(13, 3.4), at(19, 9), p.join(","), at(19, -9), at(13, -3.4)].join(" ");
};
const arrows: [Pt, Pt][] = [
  [[241, 160], [316, 29]],
  [[557, 234], [624, 81]],
  [[318, 481], [286, 317]],
  [[783, 337], [697, 280]],
  [[750, 368], [690, 318]],
  [[760, 564], [619, 528]],
  [[773, 686], [656, 649]],
  [[761, 812], [692, 779]],
  [[456, 807], [573, 748]],
];

const hasLatin = (t: string) => /[A-Z0-9]/.test(t);

export default function App() {
  return (
    <Page>
      <Global />
      <Logo />
      <TitleRow>
        <QuickBar>
          {[
            <path key="a" d="M.5 0v5h14V0" stroke={BLUE} />,
            <path key="b" d="M1 5l4 0 9-5" stroke={BLUE} />,
            <path key="c" d="M.5 0v5h14V0M4 0v3h7V0" stroke={BLUE} />,
            <path key="d" d="M2 0l-1 4 4 0 7-4" stroke={BLUE} />,
            <path key="e" d="M12 0l1 4-4 0-7-4" stroke="#ccc" />,
            <path key="f" d="M3 0l5 3-5 2h8" stroke="#3a7fcc" />,
            <path key="g" d="M1 0v5h8M10 3l3 2" stroke={BLUE} />,
            <path key="h" d="M1 0v5h8M10 3l3 2" stroke={ORANGE} />,
            <circle key="i" cx="7" cy="1" r="3.5" stroke="#ccc" />,
            <path key="j" d="M2 4h10" stroke="#ccc" />,
            <path key="k" d="M1 0v5M5 0v5M9 0v5M13 0v5" stroke="#ccc" />,
            <path key="l" d="M1 0h12v6H1z" fill={ORANGE} />,
          ].map((n, i) => (
            <svg key={i} width="15" height="6" viewBox="0 0 15 6" fill="none">{n}</svg>
          ))}
          <Caret $dark />
        </QuickBar>
        <WindowTitle>{"广联达BIM土建计量平台  GTJ2018 -  [F:\\2019-7-29-建庭旅山所（蒋部长同学）\\预算(2019-8-1-旅山所装修.GTJ)]"}</WindowTitle>
        <WindowControls><span /><span /><span /></WindowControls>
      </TitleRow>

      <TabRow>
        {["开始", "工程设置", "建模", "视图", "工具", "工程量", "云应用"].map((t) => (
          <TopTab key={t} $on={t === "工程量"}>{t}</TopTab>
        ))}
        <TopRight>
          <SearchBox>基础建模可以识别CAD图中的独基和承台吗？{small.searchGlass}</SearchBox>
          <Avatar />
          <UserName>唐</UserName>
          <TopIcons>
            {small.bell}{small.chat}{small.help}{small.shirt}{small.box}
          </TopIcons>
        </TopRight>
      </TabRow>

      <Ribbon>
        {ribbon.map((g) => (
          <RibbonGroup key={g.label} $min={g.min}>
            <RibbonButtons>
              {g.buttons.map((b: any) => (
                <RibbonButton key={b.t} $off={b.off}>
                  {ribbonIcons[b.i]}
                  {b.t}
                </RibbonButton>
              ))}
            </RibbonButtons>
            <RibbonLabel>{g.label}</RibbonLabel>
          </RibbonGroup>
        ))}
      </Ribbon>

      <FilterStrip>
        {["第6层新1层", "装修", "房间", "办公室"].map((t) => (
          <FilterSelect key={t}>{t}<Caret /></FilterSelect>
        ))}
      </FilterStrip>

      <Workspace>
        <LeftNav>
          <NavHeader>导航树</NavHeader>
          <NavTools>
            <NavToolButton>{small.list}</NavToolButton>
            <NavToolButton>{small.form}</NavToolButton>
          </NavTools>
          <NavTree>
            {navBefore.map((t) => <NavRow key={t}>{t}</NavRow>)}
            {navSubs.map((s) => (
              <NavSub key={s.t} $on={s.on}>{small[s.i]}{s.t}</NavSub>
            ))}
            {navAfter.map((t) => <NavRow key={t}>{t}</NavRow>)}
          </NavTree>
        </LeftNav>
        <LightGap />
        <ClosedPane>×</ClosedPane>
        <CadStrip><StripArt /></CadStrip>
      </Workspace>

      <Dialog>
        <DialogTitle>表格输入</DialogTitle>
        <DialogTools>
          <FloorSelect>第6层新1层<Caret $dark /></FloorSelect>
          <ToolItem $pad={6}>{small.save}单构件存盘<CaretSlot><Caret $dark /></CaretSlot></ToolItem>
          <ToolItem $pad={6}>{small.copy}复制构件到其它楼层<CaretSlot><Caret $dark /></CaretSlot></ToolItem>
        </DialogTools>
        <TabStrip>
          <SheetTab $on>钢筋</SheetTab>
          <SheetTab>土建</SheetTab>
        </TabStrip>
        <MainRow>
          <LeftColumn>
            <BoxTools>
              <ToolItem>{small.node}节点</ToolItem>
              <ToolItem>{small.component}构件</ToolItem>
              <ToolItem>{small.del}删除</ToolItem>
              <ToolItem>{small.find}查找</ToolItem>
              <ToolItem>{small.lock}锁定<CaretSlot><Caret $dark /></CaretSlot></ToolItem>
              <MoreArrows>▸▸</MoreArrows>
            </BoxTools>
            <TreeBox>
              <TreeRow $indent={12}>{small.openArrow}{small.folder}钢筋表格构件</TreeRow>
              <TreeRow $indent={40}><TreeChip>{small.stair}楼梯</TreeChip></TreeRow>
            </TreeBox>
            <PropGap />
            <PropBox>
              <PropTable>
                <colgroup>
                  <col width="7" />
                  <col width="101" />
                  <col width="217" />
                </colgroup>
                <thead>
                  <tr><th /><th>属性名称</th><th>属性值</th></tr>
                </thead>
                <tbody>
                  {props.map((r, i) => (
                    <tr key={r[0]}><td>{i + 1}</td><td>{r[0]}</td><td>{r[1]}</td></tr>
                  ))}
                </tbody>
              </PropTable>
            </PropBox>
          </LeftColumn>

          <RightStack>
            <TopPanes>
              <GroupBox>
                <GroupLegend>图集列表</GroupLegend>
                <ListBox>
                  {atlas.map((t) => (
                    <AtlasRow key={t}>
                      <ExpandSlot>{small.closedArrow}</ExpandSlot>
                      <AtlasChip $w={147} $latin={hasLatin(t)} $tone={t === "圈过梁" ? "#e3f1fc" : undefined}>{small.book}{t}</AtlasChip>
                    </AtlasRow>
                  ))}
                  <AtlasRow>
                    <ExpandSlot>{small.openArrow}</ExpandSlot>
                    <AtlasChip $w={147} $latin>{small.openBook}16G101-2新增楼梯</AtlasChip>
                  </AtlasRow>
                  <AtlasRow $indent={41}>
                    <AtlasChip $w={126} $latin>{small.sheetA}CTa型楼梯</AtlasChip>
                  </AtlasRow>
                  <AtlasRow $indent={41}>
                    <AtlasChip $w={126} $latin $tone="#c5d7ee">{small.sheetB}CTb型楼梯</AtlasChip>
                  </AtlasRow>
                </ListBox>
              </GroupBox>
              <GroupBox $grow>
                <GroupLegend>图形显示</GroupLegend>
                <CoordLine>(X: 15 Y: 722</CoordLine>
                <CadView><CadDrawing /></CadView>
              </GroupBox>
            </TopPanes>
            <BottomPanel>
              <BottomTools>
                <ArrowKey><svg width="10" height="15" viewBox="0 0 10 15" fill="none"><path d="M5 2L1 7h2.5v6h3V7H9z" fill="#999" /></svg></ArrowKey>
                <ArrowKey><svg width="10" height="15" viewBox="0 0 10 15" fill="none"><path d="M5 13L1 8h2.5V2h3v6H9z" fill="#999" /></svg></ArrowKey>
                <ToolItem $on>{small.aje}参数输入</ToolItem>
                <ToolItem>{small.insert}插入</ToolItem>
                <ToolItem>{small.del}删除</ToolItem>
                <ToolItem $off>{small.scale}缩尺配筋</ToolItem>
                <ToolItem $off>{small.info}钢筋信息</ToolItem>
                <ToolItem>{small.library}钢筋图库</ToolItem>
                <ToolItem>{small.other}其他<CaretSlot><Caret $dark /></CaretSlot></ToolItem>
              </BottomTools>
              <GridTable>
                <colgroup>
                  {columns.map((c, i) => <col key={i} width={c[1]} />)}
                </colgroup>
                <thead>
                  <tr>
                    {columns.map((c, i) => (
                      <th key={i}>{i === 1 ? <HeadCellActive>{c[0]}</HeadCellActive> : <HeadCell>{c[0]}</HeadCell>}</th>
                    ))}
                  </tr>
                </thead>
                <tbody>
                  {[1, 2].map((n) => (
                    <tr key={n}>
                      {columns.map((_, i) => (
                        <td key={i}>{i === 0 ? <RowNum $on={n === 1}>{n}</RowNum> : null}</td>
                      ))}
                    </tr>
                  ))}
                </tbody>
              </GridTable>
            </BottomPanel>
          </RightStack>
        </MainRow>
      </Dialog>

      <Arrows width="1886" height="970" viewBox="0 0 1886 970">
        {arrows.map((a, i) => <polygon key={i} points={arrow(a[0], a[1])} fill="#f01ff0" />)}
      </Arrows>
    </Page>
  );
}
